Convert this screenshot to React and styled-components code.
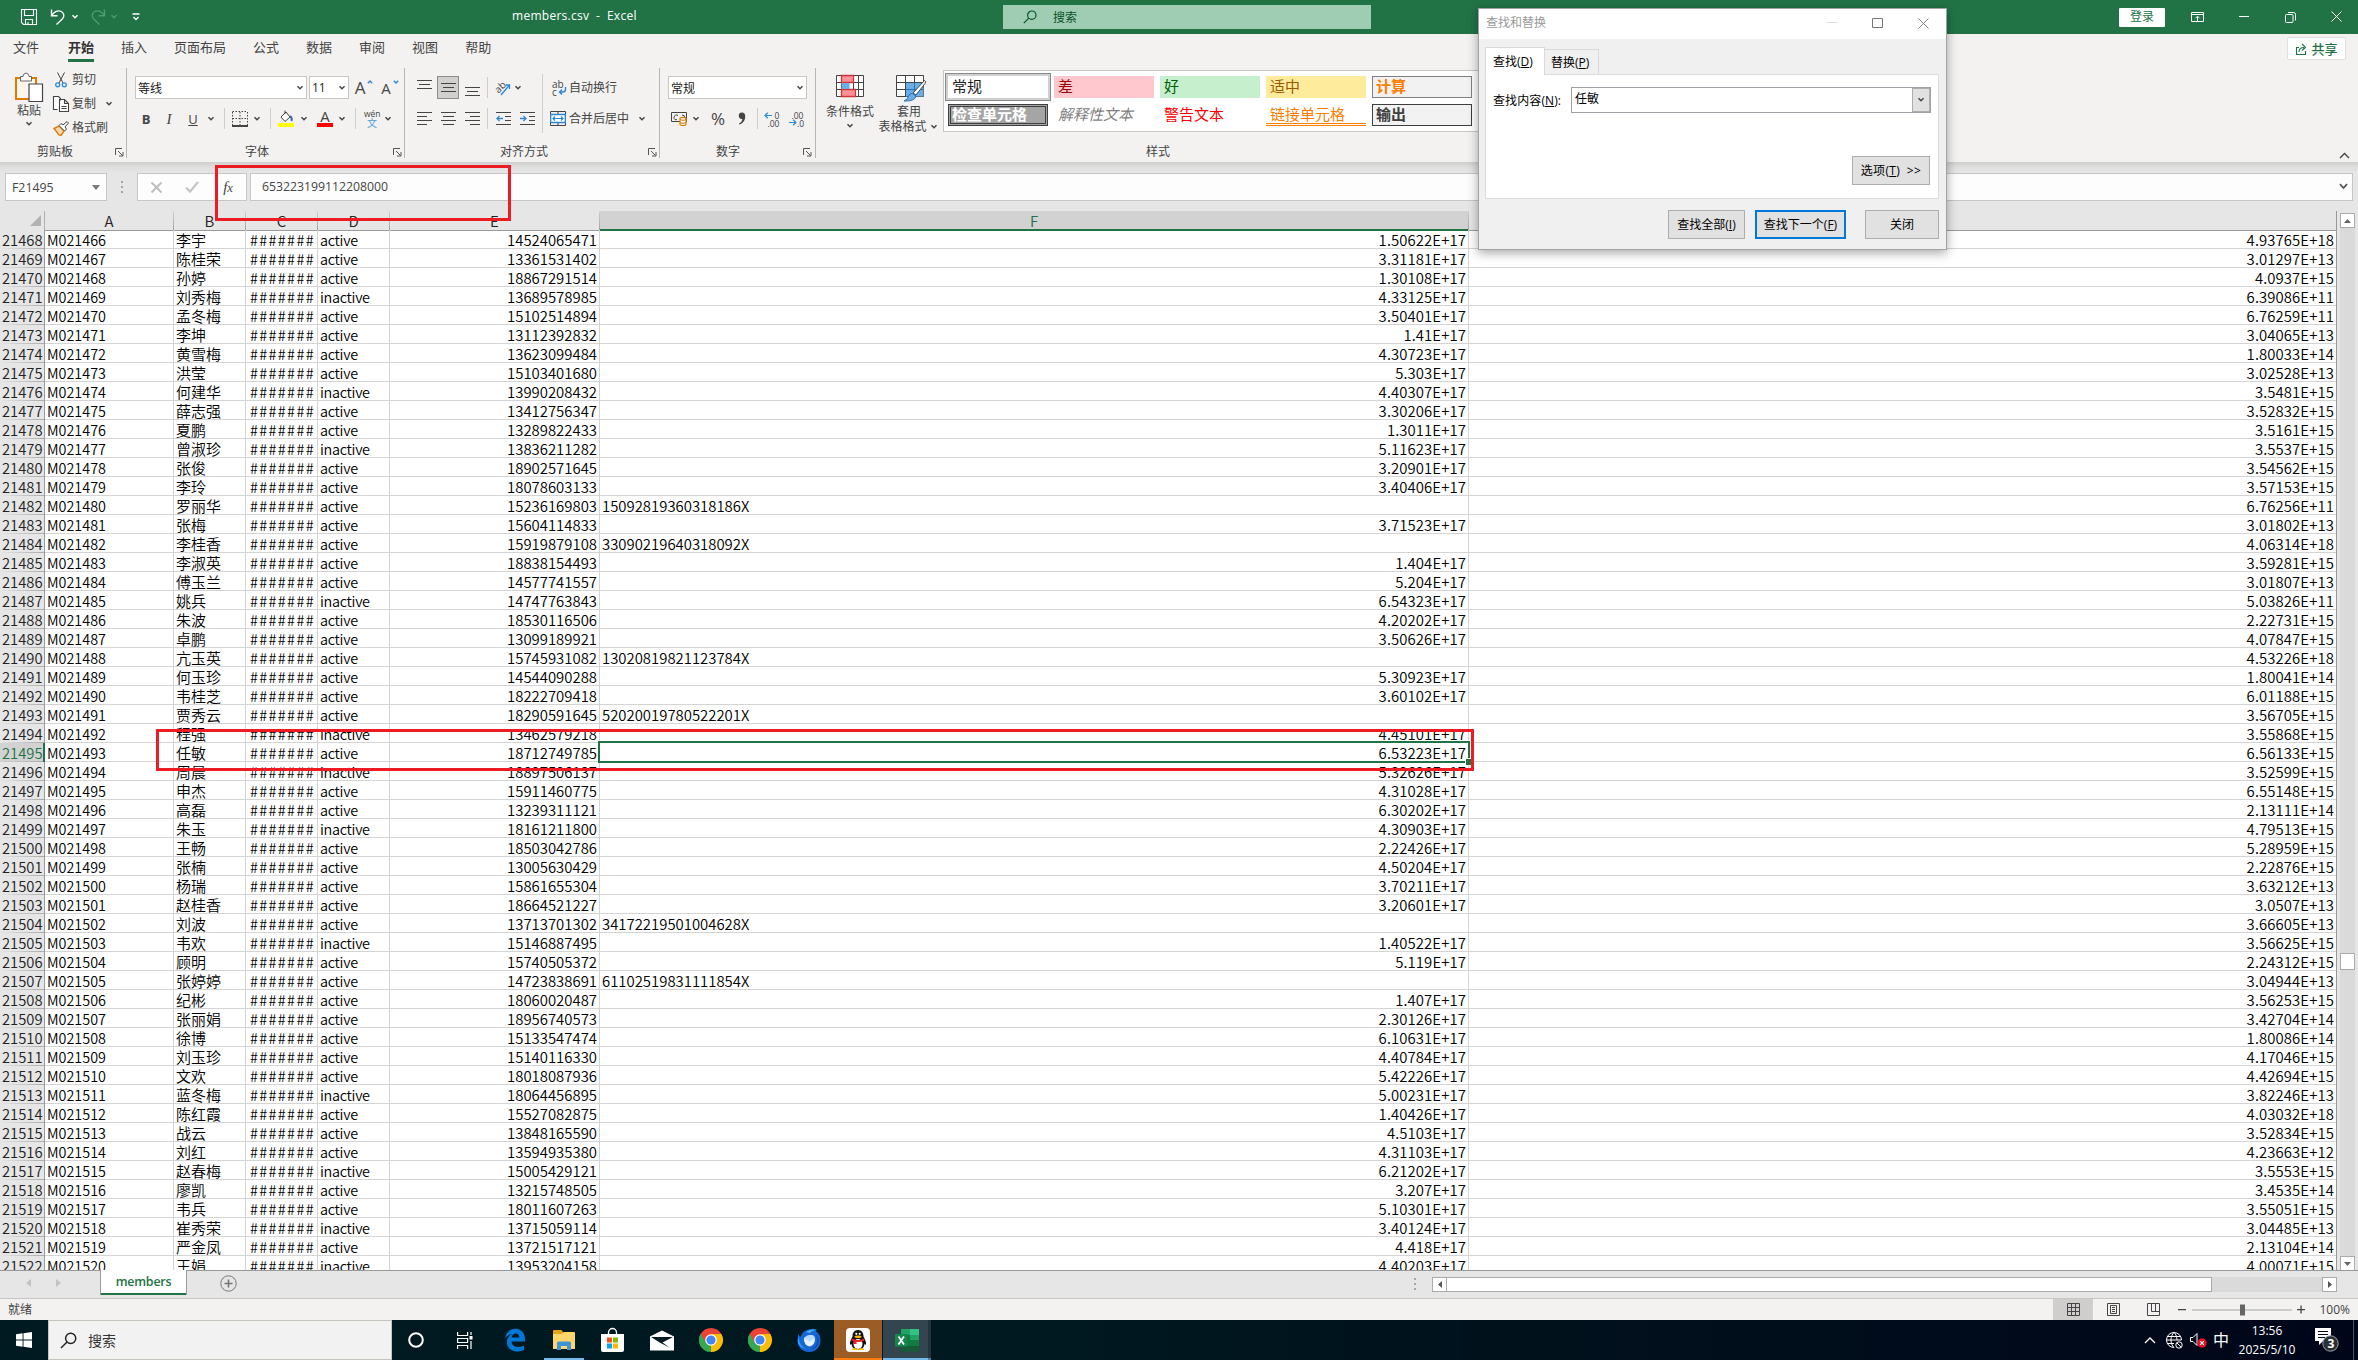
import React from "react";
import styled, { createGlobalStyle, css } from "styled-components";

const UI = `"Open Sans", "Noto Sans CJK SC", sans-serif`;
const SHEET = `"Noto Sans CJK SC", "Noto Sans", sans-serif`;
const GREEN = "#217346";
const RED = "#ed1c24";

const Global = createGlobalStyle`
  * { box-sizing: border-box; }
  html, body { margin: 0; padding: 0; overflow: hidden; }
  body { font-family: ${UI}; font-size: 12px; color: #444; }
`;

/* ---------- data ---------- */
const SOURCE = `李宇|0|14524065471|1.50622E+17|4.93765E+18
陈桂荣|0|13361531402|3.31181E+17|3.01297E+13
孙婷|0|18867291514|1.30108E+17|4.0937E+15
刘秀梅|1|13689578985|4.33125E+17|6.39086E+11
孟冬梅|0|15102514894|3.50401E+17|6.76259E+11
李坤|0|13112392832|1.41E+17|3.04065E+13
黄雪梅|0|13623099484|4.30723E+17|1.80033E+14
洪莹|0|15103401680|5.303E+17|3.02528E+13
何建华|1|13990208432|4.40307E+17|3.5481E+15
薛志强|0|13412756347|3.30206E+17|3.52832E+15
夏鹏|0|13289822433|1.3011E+17|3.5161E+15
曾淑珍|1|13836211282|5.11623E+17|3.5537E+15
张俊|0|18902571645|3.20901E+17|3.54562E+15
李玲|0|18078603133|3.40406E+17|3.57153E+15
罗丽华|0|15236169803|15092819360318186X|6.76256E+11
张梅|0|15604114833|3.71523E+17|3.01802E+13
李桂香|0|15919879108|33090219640318092X|4.06314E+18
李淑英|0|18838154493|1.404E+17|3.59281E+15
傅玉兰|0|14577741557|5.204E+17|3.01807E+13
姚兵|1|14747763843|6.54323E+17|5.03826E+11
朱波|0|18530116506|4.20202E+17|2.22731E+15
卓鹏|0|13099189921|3.50626E+17|4.07847E+15
亢玉英|0|15745931082|13020819821123784X|4.53226E+18
何玉珍|0|14544090288|5.30923E+17|1.80041E+14
韦桂芝|0|18222709418|3.60102E+17|6.01188E+15
贾秀云|0|18290591645|52020019780522201X|3.56705E+15
程强|1|13462579218|4.45101E+17|3.55868E+15
任敏|0|18712749785|6.53223E+17|6.56133E+15
周晨|1|18897506137|5.32626E+17|3.52599E+15
申杰|0|15911460775|4.31028E+17|6.55148E+15
高磊|0|13239311121|6.30202E+17|2.13111E+14
朱玉|1|18161211800|4.30903E+17|4.79513E+15
王畅|0|18503042786|2.22426E+17|5.28959E+15
张楠|0|13005630429|4.50204E+17|2.22876E+15
杨瑞|0|15861655304|3.70211E+17|3.63212E+13
赵桂香|0|18664521227|3.20601E+17|3.0507E+13
刘波|0|13713701302|34172219501004628X|3.66605E+13
韦欢|1|15146887495|1.40522E+17|3.56625E+15
顾明|0|15740505372|5.119E+17|2.24312E+15
张婷婷|0|14723838691|61102519831111854X|3.04944E+13
纪彬|0|18060020487|1.407E+17|3.56253E+15
张丽娟|0|18956740573|2.30126E+17|3.42704E+14
徐博|0|15133547474|6.10631E+17|1.80086E+14
刘玉珍|0|15140116330|4.40784E+17|4.17046E+15
文欢|0|18018087936|5.42226E+17|4.42694E+15
蓝冬梅|1|18064456895|5.00231E+17|3.82246E+13
陈红霞|0|15527082875|1.40426E+17|4.03032E+18
战云|0|13848165590|4.5103E+17|3.52834E+15
刘红|0|13594935380|4.31103E+17|4.23663E+12
赵春梅|1|15005429121|6.21202E+17|3.5553E+15
廖凯|0|13215748505|3.207E+17|3.4535E+14
韦兵|0|18011607263|5.10301E+17|3.55051E+15
崔秀荣|1|13715059114|3.40124E+17|3.04485E+13
严金凤|0|13721517121|4.418E+17|2.13104E+14
王娟|1|13953204158|4.40203E+17|4.00071E+15`;

const ROWS = SOURCE.split("\n").map((line, i) => {
  const [name, inactive, phone, idNo, card] = line.split("|");
  return { n: 21468 + i, member: "M0" + (21466 + i), name, status: inactive === "1" ? "inactive" : "active", phone, idNo, card };
});
const ACTIVE_ROW = 21495;
const COLUMNS = "45px 129px 72px 72px 72px 210px 869px 868px";

/* ---------- shell ---------- */
const Screen = styled.div`
  position: relative;
  width: 2358px;
  height: 1360px;
  display: flex;
  flex-direction: column;
  overflow: hidden;
  background: #e6e6e6;
`;
const Icon = styled.svg`
  display: block;
  flex: none;
  margin-left: ${(p) => p.$ml || 0}px;
  margin-top: ${(p) => p.$mt || 0}px;
  overflow: visible;
`;
const Chevron = ({ ml, mt, color = "#444", w = 8 }) => (
  <Icon $ml={ml} $mt={mt} width={w} height="6" viewBox="0 0 8 6" fill="none" stroke={color} strokeWidth="1.4">
    <path d="M1.5 1.2 4 3.8 6.5 1.2" />
  </Icon>
);
const Label = styled.span`
  flex: none;
  white-space: nowrap;
  font-size: ${(p) => p.$size || 12}px;
  line-height: 16px;
  margin-left: ${(p) => p.$ml || 0}px;
`;

/* ---------- title bar ---------- */
const TitleBar = styled.header`
  height: 34px;
  flex: none;
  display: flex;
  align-items: center;
  background: ${GREEN};
  color: #fff;
`;
const QuickAccess = styled.div`
  width: 512px;
  display: flex;
  align-items: center;
  padding-left: 21px;
`;
const FileName = styled.div`
  width: 491px;
  font-size: 12px;
  white-space: pre;
  padding-bottom: 4px;
  letter-spacing: 0.27px;
`;
const TitleSearch = styled.div`
  width: 368px;
  height: 24px;
  display: flex;
  align-items: center;
  padding-left: 20px;
  gap: 16px;
  background: #9fcdb3;
  color: #0b5229;
`;
const WindowButtons = styled.div`
  margin-left: auto;
  display: flex;
  align-items: center;
  padding-right: 16px;
`;
const Login = styled.div`
  width: 46px;
  height: 19px;
  background: #fff;
  color: ${GREEN};
  text-align: center;
  line-height: 18px;
  font-size: 12px;
  border-radius: 1px;
  margin-right: 26px;
`;

/* ---------- ribbon ---------- */
const Ribbon = styled.section`
  height: 128px;
  flex: none;
  background: #f3f2f1;
  display: flex;
  flex-direction: column;
`;
const TabRow = styled.nav`
  height: 34px;
  display: flex;
  padding-left: 13px;
  gap: 27px;
`;
const Tab = styled.div`
  height: 28px;
  font-size: 13px;
  line-height: 27px;
  color: #444;
  &:first-child { margin-right: 2px; }
  ${(p) => p.$on && css`
    font-weight: 700;
    color: #333;
    border-bottom: 3px solid ${GREEN};
  `}
`;
const Share = styled.div`
  margin: 3px 12px 0 auto;
  width: 59px;
  height: 23px;
  display: flex;
  align-items: center;
  justify-content: center;
  gap: 4px;
  font-size: 13px;
  font-weight: 500;
  color: ${GREEN};
  background: #fff;
  border: 1px solid #e1dfdd;
  border-radius: 2px;
`;
const Groups = styled.div`
  display: flex;
  height: 90px;
`;
const Group = styled.div`
  ${(p) => (p.$w ? `width: ${p.$w}px;` : "flex: 1;")}
  flex-shrink: 0;
  display: flex;
  flex-direction: column;
  ${(p) => p.$w && "border-right: 1px solid #b8b6b4;"}
`;
const GroupBody = styled.div`
  height: 75px;
  display: flex;
`;
const GroupFooter = styled.div`
  height: 15px;
  display: flex;
  align-items: center;
  font-size: 12px;
  padding-top: 3px;
  line-height: 14px;
  padding-left: ${(p) => p.$pl}px;
`;
const Launcher = styled(Icon)`
  margin-left: auto;
  margin-right: ${(p) => p.$mr}px;
`;
const Stack = styled.div`
  display: flex;
  flex-direction: column;
`;
const Tools = styled.div`
  display: flex;
  align-items: center;
  height: 23px;
  margin-top: 8px;
`;
const MiniRow = styled.div`
  display: flex;
  align-items: center;
  height: 24px;
`;
const BigButton = styled.div`
  display: flex;
  flex-direction: column;
  align-items: center;
  width: ${(p) => p.$w}px;
  margin-left: ${(p) => p.$ml || 0}px;
  padding-top: ${(p) => p.$pt}px;
  line-height: 15px;
  text-align: center;
  white-space: nowrap;
`;
const BigLabel = styled.span`
  margin-top: ${(p) => p.$mt || 0}px;
  padding-left: ${(p) => p.$pl || 0}px;
`;
const Combo = styled.div`
  height: 23px;
  width: ${(p) => p.$w}px;
  margin-left: ${(p) => p.$ml || 0}px;
  display: flex;
  align-items: center;
  justify-content: space-between;
  padding: 0 2px 0 2px;
  border: 1px solid #c8c6c4;
  background: #fff;
  color: #222;
  font-size: 12px;
`;
const Divider = styled.i`
  width: 1px;
  flex: none;
  height: ${(p) => p.$h || 21}px;
  margin-left: ${(p) => p.$ml}px;
  margin-top: ${(p) => p.$mt || 0}px;
  background: #d0cecc;
`;
const Glyph = styled.span`
  width: 16px;
  flex: none;
  text-align: center;
  margin-left: ${(p) => p.$ml || 0}px;
  font: ${(p) => p.$font};
  color: ${(p) => p.$c || "#444"};
`;
const PressedTool = styled.div`
  width: 22px;
  height: 23px;
  margin-left: 5px;
  display: flex;
  align-items: center;
  justify-content: center;
  background: #d2d0ce;
  border: 1px solid #8f8d8b;
`;
const Gallery = styled.div`
  width: 540px;
  height: 62px;
  margin: 2px 0 0 3px;
  padding: 5px 0 0 4px;
  display: grid;
  grid-template-columns: repeat(5, 100px);
  grid-auto-rows: 22px;
  gap: 6px;
  background: #fff;
  border: 1px solid #c8c6c4;
`;
const StyleCell = styled.div`
  padding-left: 4px;
  font-family: ${SHEET};
  font-size: 15px;
  line-height: 20px;
  white-space: nowrap;
  color: ${(p) => p.$c || "#222"};
  background: ${(p) => p.$bg || "#fff"};
  ${(p) => p.$css}
`;
const MiniInline = styled.div`
  display: flex;
  align-items: center;
`;
const RibbonShadow = styled.div`
  height: 11px;
  flex: none;
  display: flex;
  justify-content: flex-end;
  padding-right: 8px;
  background: linear-gradient(#cfcecd, #dedede 45%, #e6e6e6);
`;

/* ---------- formula bar ---------- */
const FormulaBar = styled.section`
  height: 28px;
  flex: none;
  display: flex;
  padding-left: 5px;
  font-size: 12.3px;
`;
const NameBox = styled.div`
  width: 102px;
  border: 1px solid #c6c6c6;
  background: #fdfdfd;
  display: flex;
  align-items: center;
  padding: 0 6px;
  justify-content: space-between;
`;
const Dots = styled.div`
  width: 30px;
  display: flex;
  flex-direction: column;
  align-items: center;
  justify-content: center;
  gap: 3px;
  &::before, &::after, & > i { content: ""; width: 2px; height: 2px; background: #a5a5a5; }
`;
const EntryButtons = styled.div`
  width: 110px;
  border: 1px solid #c6c6c6;
  background: #fdfdfd;
  display: flex;
  align-items: center;
`;
const FormulaInput = styled.div`
  width: 2103px;
  margin-left: 3px;
  border: 1px solid #c6c6c6;
  background: #fdfdfd;
  display: flex;
  align-items: center;
  justify-content: space-between;
  padding: 0 4px 2px 11px;
  letter-spacing: -0.03px;
`;

/* ---------- sheet ---------- */
const SheetArea = styled.main`
  height: 1069px;
  flex: none;
  display: flex;
  padding-top: 10px;
`;
const Sheet = styled.div`
  position: relative;
  width: 2337px;
  height: 1059px;
  overflow: hidden;
  font-family: ${SHEET};
  border-right: 1px solid #999;
  background: #fff;
`;
const HeaderRow = styled.div`
  display: grid;
  grid-template-columns: ${COLUMNS};
  height: 19px;
  background: #e6e6e6;
`;
const ColHead = styled.div`
  text-align: center;
  font-size: 15px;
  line-height: 20px;
  font-weight: 350;
  color: #222;
  border-right: 1px solid;
  border-image: linear-gradient(#d6d6d6, #9b9b9b) 1;
  box-shadow: inset 0 -1px #9b9b9b;
  ${(p) => p.$on && css`
    background: #d2d2d2;
    color: ${GREEN};
    box-shadow: inset 0 -2px ${GREEN};
  `}
`;
const Corner = styled.div`
  display: flex;
  justify-content: flex-end;
  align-items: flex-end;
  padding: 0 3px 4px 0;
  border-right: 1px solid #b0b0b0;
  border-bottom: 1px solid #9b9b9b;
`;
const Row = styled.div`
  display: grid;
  grid-template-columns: ${COLUMNS};
  height: 19px;
`;
const RowHead = styled.div`
  font-size: 14.8px;
  line-height: 19px;
  font-weight: 350;
  padding-left: 2px;
  color: #222;
  border-right: 1px solid #9b9b9b;
  background: linear-gradient(90deg, #e6e6e6, #ababab) bottom / 100% 1px no-repeat, #e6e6e6;
  ${(p) => p.$on && css`
    color: ${GREEN};
    background: linear-gradient(90deg, #d2d2d2, #ababab) bottom / 100% 1px no-repeat, #d2d2d2;
    border-right: 2px solid ${GREEN};
  `}
`;
const Cell = styled.div`
  overflow: hidden;
  white-space: nowrap;
  height: 19px;
  padding: 0 2px;
  font-size: ${(p) => p.$size || 14.4}px;
  line-height: 19px;
  font-weight: 350;
  letter-spacing: ${(p) => p.$ls || 0}px;
  text-align: ${(p) => (p.$right ? "right" : "left")};
  color: #000;
  border-right: 1px solid #d4d4d4;
  border-bottom: 1px solid #d4d4d4;
`;
const Selection = styled.div`
  position: absolute;
  left: 598px;
  top: 530px;
  width: 872px;
  height: 22px;
  border: 2px solid ${GREEN};
  &::after {
    content: "";
    position: absolute;
    right: -4px;
    bottom: -4px;
    width: 6px;
    height: 6px;
    background: ${GREEN};
    border: solid #fff;
    border-width: 1px 0 0 1px;
  }
`;
const VScroll = styled.div`
  width: 15px;
  height: 1058px;
  margin: 2px 0 0 3px;
  display: flex;
  flex-direction: column;
  background: #dadada;
`;
const ScrollButton = styled.div`
  width: 15px;
  height: 15px;
  flex: none;
  display: flex;
  align-items: center;
  justify-content: center;
  background: #fff;
  border: 1px solid #ababab;
`;
const VThumb = styled.div`
  height: 17px;
  margin: 725px 0 auto;
  border: 1px solid #ababab;
  background: #fff;
`;

/* ---------- sheet tabs and status ---------- */
const SheetTabs = styled.div`
  height: 28px;
  flex: none;
  display: flex;
  border-top: 1px solid #999;
`;
const TabArrows = styled.div`
  width: 100px;
  display: flex;
  padding: 8px 0 0 26px;
  gap: 22px;
`;
const SheetTab = styled.div`
  width: 87px;
  height: 25px;
  margin-top: -1px;
  background: #fff;
  color: ${GREEN};
  border: solid #9b9b9b;
  border-width: 0 1px;
  box-shadow: inset 0 -2px ${GREEN};
  text-align: center;
  font-size: 12.4px;
  font-weight: 600;
  line-height: 24px;
  letter-spacing: -0.2px;
`;
const HScroll = styled.div`
  width: 905px;
  height: 15px;
  margin: 6px 0 0 11px;
  display: flex;
  background: #dadada;
`;
const HThumb = styled.div`
  width: 766px;
  margin: 0 auto 0 -1px;
  border: 1px solid #ababab;
  background: #fff;
`;
const TabDots = styled(Dots)`
  width: 12px;
  height: 26px;
`;
const TabBarRight = styled.div`
  margin-left: auto;
  display: flex;
  padding-right: 21px;
`;
const StatusBar = styled.footer`
  height: 22px;
  flex: none;
  display: flex;
  align-items: center;
  padding: 0 8px;
  border-top: 1px solid #c6c6c6;
  background: #f3f2f1;
`;
const StatusRight = styled.div`
  margin-left: auto;
  display: flex;
  align-items: center;
  height: 21px;
`;
const ViewButton = styled.div`
  width: 40px;
  height: 21px;
  display: flex;
  align-items: center;
  justify-content: center;
  background: ${(p) => (p.$on ? "#d0cecc" : "none")};
`;

/* ---------- taskbar ---------- */
const Taskbar = styled.footer`
  height: 40px;
  flex: none;
  display: flex;
  align-items: center;
  background: linear-gradient(90deg, #001a22 0%, #001820 45%, #000f1b 70%, #00061a 100%);
  color: #fff;
`;
const StartButton = styled.div`
  width: 48px;
  display: flex;
  justify-content: center;
`;
const TaskSearch = styled.div`
  width: 344px;
  height: 40px;
  display: flex;
  align-items: center;
  gap: 11px;
  padding-left: 11px;
  font-size: 14px;
  color: #333;
  background: #f2f2f2;
  border: 1px solid #c4c4bc;
`;
const TaskItem = styled.div`
  width: ${(p) => p.$w || 49}px;
  height: 40px;
  flex: none;
  display: flex;
  align-items: center;
  justify-content: center;
  background: ${(p) => p.$bg || "none"};
  margin-right: ${(p) => p.$mr || 0}px;
  ${(p) => p.$line && css`
    background: linear-gradient(${p.$line}, ${p.$line}) center bottom / ${p.$lw || "100%"} 2px no-repeat, ${p.$bg || "transparent"};
  `}
`;
const Tray = styled.div`
  margin-left: auto;
  display: flex;
  align-items: center;
`;
const Clock = styled.div`
  width: 64px;
  margin-left: 6px;
  text-align: center;
  font-size: 12px;
  line-height: 19px;
`;
const PeekLine = styled.i`
  width: 1px;
  height: 40px;
  margin: 0 4px 0 14px;
  background: #4b5560;
`;

/* ---------- dialog ---------- */
const Dialog = styled.div`
  position: absolute;
  left: 1478px;
  top: 8px;
  width: 469px;
  height: 242px;
  display: flex;
  flex-direction: column;
  color: #000;
  background: #f0f0f0;
  border: 1px solid #a2a2a2;
  box-shadow: 0 3px 10px rgba(0, 0, 0, 0.35);
`;
const DialogTitle = styled.div`
  height: 30px;
  flex: none;
  display: flex;
  align-items: center;
  padding: 0 17px 2px 7px;
  background: #fff;
  color: #999;
`;
const DialogTabs = styled.div`
  display: flex;
  align-items: flex-end;
  height: 35px;
  padding-left: 6px;
`;
const DialogTab = styled.div`
  height: ${(p) => (p.$on ? 28 : 25)}px;
  width: ${(p) => p.$w}px;
  padding-left: ${(p) => (p.$on ? 7 : 6)}px;
  line-height: ${(p) => (p.$on ? 28 : 25)}px;
  white-space: nowrap;
  background: ${(p) => (p.$on ? "#fff" : "#f0f0f0")};
  border: 1px solid #d9d9d9;
  border-bottom: 0;
  ${(p) => (p.$on ? "margin-bottom: -1px; position: relative;" : "border-left: 0;")}
`;
const DialogPanel = styled.div`
  margin-left: 6px;
  width: 454px;
  height: 125px;
  border: 1px solid #dcdcdc;
  background: #fff;
  display: flex;
  flex-direction: column;
  padding: 12px 7px 0 7px;
`;
const FieldRow = styled.div`
  display: flex;
  align-items: center;
  letter-spacing: 0.1px;
`;
const Field = styled.div`
  width: 360px;
  height: 26px;
  margin-left: auto;
  display: flex;
  justify-content: space-between;
  border: 1px solid #a0a0a6;
  padding-left: 3px;
  line-height: 22px;
`;
const DropButton = styled.div`
  width: 18px;
  display: flex;
  align-items: center;
  justify-content: center;
  background: #e1e1e1;
  border: 1px solid #adadad;
`;
const Button = styled.div`
  width: ${(p) => p.$w}px;
  height: 29px;
  margin-left: ${(p) => p.$ml || 0}px;
  text-align: center;
  line-height: ${(p) => (p.$primary ? 25 : 27)}px;
  letter-spacing: ${(p) => p.$ls || 0}px;
  white-space: pre;
  background: #e1e1e1;
  border: ${(p) => (p.$primary ? "2px solid #0078d7" : "1px solid #adadad")};
`;
const OptionsRow = styled.div`
  display: flex;
  justify-content: flex-end;
  margin-top: 43px;
  padding-right: 1px;
`;
const DialogActions = styled.div`
  display: flex;
  justify-content: flex-end;
  padding: 11px 7px 0 0;
`;
const Highlight = styled.div`
  position: absolute;
  left: ${(p) => p.$x}px;
  top: ${(p) => p.$y}px;
  width: ${(p) => p.$w}px;
  height: ${(p) => p.$h}px;
  border: 3px solid ${RED};
`;

/* ---------- icons ---------- */
const Lines = ({ ml, mt, rows, h = 15 }) => (
  <Icon $ml={ml} $mt={mt} width="15" height={h} viewBox={`0 0 15 ${h}`} stroke="#444" strokeWidth="1">
    {rows.map(([a, b, y]) => <path key={y} d={`M${a} ${y + 0.5}H${b}`} />)}
  </Icon>
);
const LauncherIcon = ({ mr }) => (
  <Launcher $mr={mr} width="9" height="9" viewBox="0 0 9 9" fill="none" stroke="#555">
    <path d="M.5 7V.5H7M3 3l4.5 4.5M8 4v4H4" />
  </Launcher>
);
const Magnifier = ({ s = 14, color }) => (
  <Icon width={s} height={s} viewBox="0 0 14 14" fill="none" stroke={color} strokeWidth="1.2">
    <circle cx="8.8" cy="5.2" r="4.2" /><path d="M5.8 8.2.8 13.2" />
  </Icon>
);
const Chrome = () => (
  <Icon width="24" height="24" viewBox="0 0 24 24">
    <path d="M12 12 1.6 6A12 12 0 0 1 22.4 6Z" fill="#ea4335" />
    <path d="M12 12 22.4 6A12 12 0 0 1 12 24Z" fill="#fbbc05" />
    <path d="M12 12 12 24A12 12 0 0 1 1.6 6Z" fill="#34a853" />
    <path d="M12 6H22.4L17.2 15Z" fill="#fbbc05" /><path d="M6.8 15 1.6 6 12 6Z" fill="#ea4335" />
    <path d="M1.6 6 6.8 15 12 18 9 23.6A12 12 0 0 1 1.6 6Z" fill="#34a853" />
    <circle cx="12" cy="12" r="5.8" fill="#fff" /><circle cx="12" cy="12" r="4.6" fill="#4285f4" />
  </Icon>
);
const Thunderbird = () => (
  <Icon width="24" height="24" viewBox="0 0 24 24">
    <path d="M1.500 5.500Q2 9 4 8.500 5 4 9 2.500 14-.5 20 1.500L18.500 3q5 3 5 9.500A11.300 11.300 0 0 1 12 24C5.500 24 .5 19 .5 12.500q0-4 1-7Z" fill="#1567d3" />
    <path d="M9 4Q13 .8 19 1.700 14 3 13 5Z" fill="#4ab3ff" />
    <path d="M2 9q0 8 6 11.500Q3 20 1 15 .2 12 2 9Z" fill="#2f9bff" />
    <path d="M7 10q3-3 6.500-3 4 0 4.500 4 0 6-5.500 7.500Q6.500 17 7 10Z" fill="#e6f2ff" />
    <path d="m7 10 5.500 3.500L18 10q-1-3-4.500-3T7 10Z" fill="#b5d9ff" />
    <path d="M18 6q3.500 4 1.500 9.500-2 4.500-6.500 6 8-1 9-8Q22.300 8.500 18 6Z" fill="#0c4fae" />
  </Icon>
);

function TopBar() {
  return (
    <TitleBar>
      <QuickAccess>
        <Icon width="16" height="16" viewBox="0 0 16 16" fill="none" stroke="#fff" strokeWidth="1.1">
          <path d="M.5.5h15v15H2.5l-2-2ZM3.5.5v6h9v-6M4.5 15.5v-5h7v5M7 15v-2" />
        </Icon>
        <Icon $ml={13} width="15" height="16" viewBox="0 0 15 16" fill="none" stroke="#fff" strokeWidth="1.4">
          <path d="M1.5.5v6.2h6M1.8 6.4C4 2.6 8 .8 11.300 2.500c3 1.700 3.200 5 1.200 7.200L6.500 15.500" />
        </Icon>
        <Chevron ml={6} color="#fff" />
        <Icon $ml={12} width="15" height="16" viewBox="0 0 15 16" fill="none" stroke="#4f9a70" strokeWidth="1.4">
          <path d="M13.500.500v6.200h-6M13.200 6.400C11 2.600 7 .8 3.700 2.500c-3 1.700-3.200 5-1.200 7.200L8.500 15.500" />
        </Icon>
        <Chevron ml={4} color="#4f9a70" />
        <Icon $ml={14} width="8" height="8" viewBox="0 0 8 8" fill="none" stroke="#fff" strokeWidth="1.300">
          <path d="M.5 1h7M1.500 4 4 6.500 6.500 4" />
        </Icon>
      </QuickAccess>
      <FileName>members.csv  -  Excel</FileName>
      <TitleSearch><Magnifier color="#0b5229" /><span>搜索</span></TitleSearch>
      <WindowButtons>
        <Login>登录</Login>
        <Icon width="13" height="12" viewBox="0 0 13 12" fill="none" stroke="#fff"><path d="M.5 1.500h12v9H.5ZM.5 3.500h12M6.500 10V5.500M4.500 7.200l2-2 2 2" /></Icon>
        <Icon $ml={35} width="10" height="2" viewBox="0 0 10 2" fill="#fff"><path d="M0 0h10v1H0Z" /></Icon>
        <Icon $ml={36} width="11" height="11" viewBox="0 0 11 11" fill="none" stroke="#fff"><path d="M.5 3.500q0-1 1-1h5.500q1 0 1 1v6q0 1-1 1h-5.500q-1 0-1-1ZM3 .5h5.500q2 0 2 2V8.500" /></Icon>
        <Icon $ml={35} $mt={-1} width="11" height="11" viewBox="0 0 11 11" stroke="#fff"><path d="M.5.5l10 10M10.500.5l-10 10" /></Icon>
      </WindowButtons>
    </TitleBar>
  );
}

function ClipboardGroup() {
  return (
    <Group $w={127}>
      <GroupBody>
        <BigButton $w={34} $ml={12} $pt={4}>
          <Icon width="28" height="31" viewBox="0 0 28 31" fill="none">
            <path d="M1 6h20v21H1Z" stroke="#e07b00" strokeWidth="2" fill="#fdf6ec" />
            <path d="M5.500 9V4.500H8C8.500 0 13.500 0 14 4.500h2.500V9Z" fill="#fff" stroke="#666" />
            <path d="M14 12h13.500v17.500H14Z" fill="#fff" stroke="#444" strokeWidth="1.200" />
          </Icon>
          <span>粘贴</span>
          <Chevron mt={3} />
        </BigButton>
        <Stack>
          <MiniRow>
            <Icon $ml={9} width="12" height="16" viewBox="0 0 12 16" fill="none">
              <path d="M2.500.5 8 11M9.500.5 4 11" stroke="#444" /><circle cx="2.700" cy="12.800" r="2" stroke="#2b88d8" strokeWidth="1.300" /><circle cx="9.300" cy="12.800" r="2" stroke="#2b88d8" strokeWidth="1.300" />
            </Icon>
            <Label $ml={5}>剪切</Label>
          </MiniRow>
          <MiniRow>
            <Icon $ml={7} width="16" height="16" viewBox="0 0 16 16" fill="#fff" stroke="#444" strokeWidth="1.100">
              <path d="M4.500 13.500h-4V.5h5l2 2v2M6.500 3.500h5l4 4v8h-9ZM11.500 3.500v4h4M8.500 10.500h5M8.500 12.500h5" />
            </Icon>
            <Label $ml={3}>复制</Label><Chevron ml={9} />
          </MiniRow>
          <MiniRow>
            <Icon $ml={7} width="16" height="15" viewBox="0 0 16 15" fill="none">
              <path d="M1 7.500 6 5l5 5-3 4.500-2-.5Z" fill="#fbd9b0" stroke="#e07b00" strokeWidth="1.400" />
              <path d="M6 4.500 8 2.500l2 1.500 4-3.500 1.500 1.500-3.500 4 1.500 2-2 2Z" fill="#fff" stroke="#444" />
            </Icon>
            <Label $ml={3}>格式刷</Label>
          </MiniRow>
        </Stack>
      </GroupBody>
      <GroupFooter $pl={37}>剪贴板<LauncherIcon mr={2} /></GroupFooter>
    </Group>
  );
}

function FontGroup() {
  return (
    <Group $w={278}>
      <GroupBody>
        <Stack>
          <Tools>
            <Combo $w={172} $ml={8}>等线<Chevron /></Combo>
            <Combo $w={40} $ml={2}>11<Chevron /></Combo>
            <Glyph $ml={3} $font={`17px/20px ${UI}`}>A</Glyph>
            <Icon $ml={-1} $mt={-12} width="6" height="4" viewBox="0 0 6 4" fill="none" stroke="#2b88d8" strokeWidth="1.300"><path d="M.8 3.200 3 1l2.200 2.200" /></Icon>
            <Glyph $ml={5} $font={`15px/20px ${UI}`}>A</Glyph>
            <Icon $ml={-1} $mt={-12} width="6" height="4" viewBox="0 0 6 4" fill="none" stroke="#2b88d8" strokeWidth="1.300"><path d="M.8.800 3 3 5.200.800" /></Icon>
          </Tools>
          <Tools>
            <Glyph $ml={11} $font={`700 13px/18px ${UI}`}>B</Glyph>
            <Glyph $ml={7} $font={`italic 15px/18px "Liberation Serif", serif`}>I</Glyph>
            <Glyph $ml={8} $font={`13px/18px ${UI}`}><u>U</u></Glyph>
            <Chevron ml={6} />
            <Divider $ml={9} />
            <Icon $ml={7} width="16" height="16" viewBox="0 0 16 16" stroke="#444" fill="none">
              <path d="M.5.500h15M.5 7.500h15M.5 1v13M8 1v13M15.500 1v13" strokeDasharray="1.500 1.500" /><path d="M0 15h16" strokeWidth="2" />
            </Icon>
            <Chevron ml={5} />
            <Divider $ml={9} />
            <Icon $ml={7} width="16" height="17" viewBox="0 0 16 17" fill="none">
              <path d="M3 7 8 2l4 5-5 4.500Z" fill="#fff" stroke="#444" /><path d="M7 4V.5" stroke="#444" /><path d="M12 6q2.500 2 1.500 5" stroke="#2b6fb8" strokeWidth="2" /><path d="M0 13h16v4H0Z" fill="#ff0" />
            </Icon>
            <Chevron ml={6} />
            <Stack>
              <Glyph $ml={9} $font={`15px/13px ${UI}`}>A</Glyph>
              <Icon $ml={9} width="16" height="4"><path d="M0 0h16v4H0Z" fill="#f00" /></Icon>
            </Stack>
            <Chevron ml={5} />
            <Divider $ml={9} />
            <Stack>
              <Glyph $ml={8} $font={`8.5px/8px ${UI}`}>wén</Glyph>
              <Glyph $ml={8} $font={`10px/10px ${UI}`} $c="#4a9fdc">文</Glyph>
            </Stack>
            <Chevron ml={4} />
          </Tools>
        </Stack>
      </GroupBody>
      <GroupFooter $pl={118}>字体<LauncherIcon mr={2} /></GroupFooter>
    </Group>
  );
}

function AlignGroup() {
  return (
    <Group $w={255}>
      <GroupBody>
        <Stack>
          <Tools>
            <Lines ml={12} mt={-6} rows={[[0, 15, 0], [2, 13, 4], [0, 15, 8]]} h={10} />
            <PressedTool><Lines rows={[[0, 15, 1], [2, 13, 5], [0, 15, 9]]} h={11} /></PressedTool>
            <Lines ml={6} mt={8} rows={[[0, 15, 0], [2, 13, 4], [0, 15, 8]]} h={10} />
            <Divider $ml={7} />
            <Icon $ml={7} width="16" height="16" viewBox="0 0 16 16" fill="none">
              <text x="0" y="11" fontSize="10" fill="#444" transform="rotate(-45 5 8)" fontFamily="Open Sans">ab</text>
              <path d="M6 15 14.500 5M10.500 5h4v4" stroke="#2b88d8" strokeWidth="1.300" />
            </Icon>
            <Chevron ml={3} />
          </Tools>
          <Tools>
            <Lines ml={12} rows={[[0, 15, 1], [0, 10, 5], [0, 15, 9], [0, 10, 13]]} />
            <Lines ml={9} rows={[[0, 15, 1], [2, 13, 5], [0, 15, 9], [2, 13, 13]]} />
            <Lines ml={9} rows={[[0, 15, 1], [5, 15, 5], [0, 15, 9], [5, 15, 13]]} />
            <Divider $ml={7} />
            <Icon $ml={8} width="15" height="15" viewBox="0 0 15 15" fill="none" stroke="#444"><path d="M0 1.500h15M9 5.500h6M9 9.500h6M0 13.500h15" /><path d="M1 7.500h6M3.500 5 1 7.500 3.500 10" stroke="#2b88d8" strokeWidth="1.300" /></Icon>
            <Icon $ml={9} width="15" height="15" viewBox="0 0 15 15" fill="none" stroke="#444"><path d="M0 1.500h15M9 5.500h6M9 9.500h6M0 13.500h15" /><path d="M0 7.500h6M3.500 5 6 7.500 3.500 10" stroke="#2b88d8" strokeWidth="1.300" /></Icon>
          </Tools>
        </Stack>
        <Divider $ml={7} $mt={6} $h={59} />
        <Stack>
          <Tools>
            <Icon $ml={9} width="15" height="16" viewBox="0 0 15 16" fill="none">
              <text x="0" y="7.500" fontSize="10" fill="#444" fontFamily="Open Sans">ab</text><text x="0" y="15.500" fontSize="10" fill="#444" fontFamily="Open Sans">c</text>
              <path d="M13.500 7v2.500q0 2.500-3 2.500H7.500M10 9.500 7.500 12l2.500 2.500" stroke="#2b88d8" strokeWidth="1.400" />
            </Icon>
            <Label $ml={2}>自动换行</Label>
          </Tools>
          <Tools>
            <Icon $ml={7} width="16" height="15" viewBox="0 0 16 15" fill="none">
              <path d="M.5.500h15v14H.5ZM8 .5v3M8 11.500v3" stroke="#444" /><path d="M.7 3.500h14.600v8H.7Z" fill="#fff" stroke="#2b88d8" strokeWidth="1.300" /><path d="M3 7.500h10M5 5.500l-2 2 2 2M11 5.500l2 2-2 2" stroke="#2b88d8" strokeWidth="1.200" />
            </Icon>
            <Label $ml={3}>合并后居中</Label><Chevron ml={9} />
          </Tools>
        </Stack>
      </GroupBody>
      <GroupFooter $pl={95}>对齐方式<LauncherIcon mr={2} /></GroupFooter>
    </Group>
  );
}

function NumberGroup() {
  const digits = { fontSize: 8.5, fill: "#444", fontFamily: "Open Sans" };
  return (
    <Group $w={156}>
      <GroupBody>
        <Stack>
          <Tools><Combo $w={139} $ml={8}>常规<Chevron /></Combo></Tools>
          <Tools>
            <Icon $ml={11} width="16" height="14" viewBox="0 0 16 14" fill="none">
              <path d="M.5.500h15v9H.5Z" stroke="#444" /><path d="M3 5.500a2.500 2.500 0 0 1 4-2M3 5.500a2 2 0 0 0 3 2M11 3q3 0 3 3" stroke="#444" />
              <path d="M9 6.500v5.500q0 1.500 3 1.500t3-1.500V6.500q0-1.200-3-1.200t-3 1.200Z" fill="#fff" stroke="#e07b00" strokeWidth="1.200" /><path d="M9 7q0 1.300 3 1.300T15 7M9 10q0 1.300 3 1.300t3-1.300" stroke="#e07b00" />
            </Icon>
            <Chevron ml={5} />
            <Glyph $ml={10} $font={`17px/20px ${UI}`}>%</Glyph>
            <Icon $ml={12} width="8" height="13" viewBox="0 0 8 13"><path d="M3.800.5a3.300 3.300 0 0 1 3.400 3.700C7.200 8 5.500 11 1.500 12.500L1 11.600C3 10.600 4.200 9 4.300 7A3.200 3.200 0 1 1 3.800.5Z" fill="#444" /></Icon>
            <Divider $ml={11} />
            <Icon $ml={7} width="16" height="16" viewBox="0 0 16 16" fill="none"><path d="M0 4.500h7M2.800 1.800 0 4.500l2.800 2.700" stroke="#2b88d8" strokeWidth="1.200" /><text x="9.500" y="7.500" {...digits}>0</text><text x="2.500" y="16" {...digits}>.00</text></Icon>
            <Icon $ml={8} width="16" height="16" viewBox="0 0 16 16" fill="none"><path d="M0 11.500h7M4.200 8.800 7 11.500l-2.800 2.700" stroke="#2b88d8" strokeWidth="1.200" /><text x="2.500" y="7.500" {...digits}>.00</text><text x="8" y="16" {...digits}>.0</text></Icon>
          </Tools>
        </Stack>
      </GroupBody>
      <GroupFooter $pl={56}>数字<LauncherIcon mr={3} /></GroupFooter>
    </Group>
  );
}

const checkCell = css`border: 1px solid #3f3f3f; box-shadow: inset 0 0 0 1px #a5a5a5, inset 0 0 0 2px #3f3f3f; font-weight: 700; line-height: 18px; padding-left: 3px;`;
const activeCell = css`box-shadow: 0 0 0 2px #d0d0d0, 0 0 0 3px #8a8a8a;`;
const boxed = (c) => css`border: 1px solid ${c}; font-weight: 700; line-height: 18px; padding-left: 3px;`;
const linked = css`border-bottom: 3px double #ff8001;`;

function StylesGroup() {
  return (
    <Group>
      <GroupBody>
        <BigButton $w={52} $ml={8} $pt={7}>
          <Icon width="28" height="22" viewBox="0 0 28 22" fill="#fff" stroke="#444">
            <path d="M.5.500h27v21H.5ZM.5 7.500h27M.5 14.500h27M5.500.500v21M17.500.500v21M22.500.500v21" />
            <path d="M5.500.500h12v7h-12ZM5.500 14.500h14v7h-14Z" fill="#ff9296" stroke="#d13438" strokeWidth="1.300" /><path d="M5.500 8h8v6h-8Z" fill="#69afe5" stroke="none" />
          </Icon>
          <BigLabel $mt={7}>条件格式</BigLabel>
          <Chevron mt={4} />
        </BigButton>
        <BigButton $w={64} $ml={0} $pt={7}>
          <Icon $ml={6} width="30" height="27" viewBox="0 0 30 27" fill="#fff" stroke="#444">
            <path d="M.5.500h27v21H.5ZM.5 7.500h27M.5 14.500h27M9.500.500v21M18.500.500v21" />
            <path d="M10 8h17.500v13.500H10Z" fill="#69afe5" stroke="none" /><path d="M10 14.500h17M18.500 8v13" stroke="#2b6fb8" />
            <path d="M28.500 5.500q2 .5.500 3L20 20l-3-2Z" /><path d="M16.500 18.500l3.500 2.500q-1 5.500-12 5 4-1.500 4.500-5 1.500-3 4-2.500Z" fill="#69afe5" stroke="#2b6fb8" />
          </Icon>
          <BigLabel $mt={2} $pl={2}>套用</BigLabel>
          <MiniInline>表格格式<Chevron ml={3} /></MiniInline>
        </BigButton>
        <Gallery>
          <StyleCell $css={activeCell}>常规</StyleCell>
          <StyleCell $bg="#ffc7ce" $c="#9c0006">差</StyleCell>
          <StyleCell $bg="#c6efce" $c="#006100">好</StyleCell>
          <StyleCell $bg="#ffeb9c" $c="#9c5700">适中</StyleCell>
          <StyleCell $bg="#f2f2f2" $c="#fa7d00" $css={boxed("#7f7f7f")}>计算</StyleCell>
          <StyleCell $bg="#a5a5a5" $c="#fff" $css={checkCell}>检查单元格</StyleCell>
          <StyleCell $c="#7f7f7f" $css="font-style: italic;">解释性文本</StyleCell>
          <StyleCell $c="#ff0000">警告文本</StyleCell>
          <StyleCell $c="#fa7d00" $css={linked}>链接单元格</StyleCell>
          <StyleCell $bg="#f2f2f2" $c="#3f3f3f" $css={boxed("#3f3f3f")}>输出</StyleCell>
        </Gallery>
      </GroupBody>
      <GroupFooter $pl={330}>样式</GroupFooter>
    </Group>
  );
}

function SheetGrid() {
  return (
    <Sheet>
      <HeaderRow>
        <Corner><Icon width="11" height="11"><path d="M11 0v11H0Z" fill="#b2b2b2" /></Icon></Corner>
        {["A", "B", "C", "D", "E", "F", ""].map((c, i) => <ColHead key={i} $on={c === "F"}>{c}</ColHead>)}
      </HeaderRow>
      {ROWS.map((r) => (
        <Row key={r.n}>
          <RowHead $on={r.n === ACTIVE_ROW}>{r.n}</RowHead>
          <Cell>{r.member}</Cell>
          <Cell $size={15}>{r.name}</Cell>
          <Cell $right $ls={1.4}>#######</Cell>
          <Cell $ls={-0.3}>{r.status}</Cell>
          <Cell $right $size={14.9}>{r.phone}</Cell>
          <Cell $right={!r.idNo.endsWith("X")} $size={14.9} $ls={r.idNo.endsWith("X") ? 0 : 0.1}>{r.idNo}</Cell>
          <Cell $right $size={14.9} $ls={0.1}>{r.card}</Cell>
        </Row>
      ))}
      <Selection />
    </Sheet>
  );
}

function Tasks() {
  return (
    <>
      <TaskItem $w={48}><Icon width="16" height="16" viewBox="0 0 16 16" fill="none" stroke="#fff" strokeWidth="2"><circle cx="8" cy="8" r="6.800" /></Icon></TaskItem>
      <TaskItem><Icon width="16" height="17" viewBox="0 0 16 17" fill="none" stroke="#fff" strokeWidth="1.200"><path d="M.6 0v3.500h10V0M.6 6.500h10v4H.6ZM.6 17v-3.500h10V17M14 0v3M14 9v8" /><path d="M14 4v3.500" strokeWidth="3" /></Icon></TaskItem>
      <TaskItem $w={51}><Icon width="22" height="24" viewBox="0 0 22 24"><path d="M1 10.500C2 4.500 6 .8 11.500.8 18 .8 21 6 21 11v2.500H7.500c.3 4 3.500 5.500 7 5.500 2.200 0 4-.6 5.500-1.500v4.300c-1.800 1-4 1.600-6.500 1.600C7 23.400 2.800 19.500 2.800 14c0-3.500 2-6.500 5-8C5 6.300 2.500 8 1 10.500Zm6.700-1h7.600c0-2.500-1.300-4-3.600-4s-3.700 1.800-4 4Z" fill="#0078d7" /></Icon></TaskItem>
      <TaskItem $w={48} $line="#76b9ed" $lw="40px"><Icon width="22" height="21" viewBox="0 0 22 21"><path d="M0 1q0-1 1-1h7.500l1.500 2v6H0Z" fill="#e3a21a" /><path d="M0 4h9l1.500-2H21q1 0 1 1v16H0Z" fill="#ffd66b" /><path d="M4 20v-7q0-1.500 1.500-1.500h11q1.500 0 1.500 1.500v7h-4v-4H8v4Z" fill="#3a94d9" /></Icon></TaskItem>
      <TaskItem><Icon width="23" height="24" viewBox="0 0 23 24"><path d="M7.500 8V4.500a4 4 0 0 1 8 0V8" fill="none" stroke="#fff" strokeWidth="1.300" /><path d="M0 6h23v16q0 2-2 2H2q-2 0-2-2Z" fill="#fff" /><path d="M6 9.500h5v5H6Z" fill="#f25022" /><path d="M12 9.500h5v5h-5Z" fill="#7fba00" /><path d="M6 15.500h5v5H6Z" fill="#00a4ef" /><path d="M12 15.500h5v5h-5Z" fill="#ffb900" /></Icon></TaskItem>
      <TaskItem><Icon width="24" height="21" viewBox="0 0 24 21"><path d="M0 6.500 12 .5l12 6v14H0Z" fill="#fff" /><path d="M1 7h22l-10.500 5.500 7 5-9-4.500Z" fill="#001a22" /></Icon></TaskItem>
      <TaskItem><Chrome /></TaskItem>
      <TaskItem><Chrome /></TaskItem>
      <TaskItem $w={50}><Thunderbird /></TaskItem>
      <TaskItem $w={48} $mr={1} $bg="#9b5c26" $line="#ff7a0f"><Icon width="24" height="24" viewBox="0 0 24 24"><rect width="24" height="24" rx="4" fill="#fff" /><path d="M12 2c4 0 5.500 3 5.500 6.500 1 2 3 5 2.500 8-.8.5-1.500-.5-1.500-.5-.5 4-3 5.500-6.500 5.500S6 20 5.500 16c0 0-.7 1-1.500.5-.5-3 1.500-6 2.500-8C6.500 5 8 2 12 2Z" fill="#111" /><ellipse cx="12" cy="16" rx="4.500" ry="5" fill="#fff" /><path d="M6 10.500q6 3 12 0l.5 2q-6.500 3-13 0ZM7.500 12.500h3V16h-3Z" fill="#e8202a" /><ellipse cx="12" cy="8.800" rx="3.500" ry="1.200" fill="#f9b800" /><circle cx="10.300" cy="5.800" r="1.100" fill="#fff" /><circle cx="13.700" cy="5.800" r="1.100" fill="#fff" /><path d="M6 21.500q3-2 5.500 0ZM12.500 21.500q3-2 5.500 0Z" fill="#f9b800" stroke="#f9b800" /></Icon></TaskItem>
      <TaskItem $w={45} $bg="#33464f" $line="#76b9ed"><Icon $ml={3} width="24" height="23" viewBox="0 0 24 23"><path d="M6 0h9v6H6Z" fill="#21a366" /><path d="M15 0h9v6h-9Z" fill="#33c481" /><path d="M6 6h9v11H6Z" fill="#107c41" /><path d="M15 6h9v5.500h-9Z" fill="#21a366" /><path d="M15 11.500h9V17h-9Z" fill="#107c41" /><path d="M6 17h18v5.500H6Z" fill="#185c37" /><path d="M0 5h12.500v12.500H0Z" fill="#17864c" /><path d="m3.500 7.500 5.500 8M9 7.500l-5.500 8" stroke="#fff" strokeWidth="1.700" /></Icon></TaskItem>
      <TaskItem $w={3} $bg="#22343d" $line="#4f7ea3" />
    </>
  );
}

const DialogControls = styled.div`
  margin-left: auto;
  display: flex;
  align-items: center;
`;

function FindDialog() {
  return (
    <Dialog>
      <DialogTitle>
        <Label>查找和替换</Label>
        <DialogControls>
          <Icon width="10" height="2"><path d="M0 0h10v1H0Z" fill="#ddd" /></Icon>
          <Icon $ml={35} width="11" height="10" viewBox="0 0 11 10" fill="none" stroke="#777"><path d="M.5.500h10v9H.5Z" /></Icon>
          <Icon $ml={35} width="11" height="11" viewBox="0 0 11 11" stroke="#888"><path d="m.5.500 10 10M10.500.500l-10 10" /></Icon>
        </DialogControls>
      </DialogTitle>
      <DialogTabs>
        <DialogTab $on $w={60}>查找(<u>D</u>)</DialogTab>
        <DialogTab $w={54}>替换(<u>P</u>)</DialogTab>
      </DialogTabs>
      <DialogPanel>
        <FieldRow>
          <span>查找内容(<u>N</u>):</span>
          <Field>任敏<DropButton><Chevron w={10} /></DropButton></Field>
        </FieldRow>
        <OptionsRow><Button $w={78} $ls={0.3}>选项(<u>T</u>)  &gt;&gt;</Button></OptionsRow>
      </DialogPanel>
      <DialogActions>
        <Button $w={77}>查找全部(<u>I</u>)</Button>
        <Button $primary $w={91} $ml={10}>查找下一个(<u>F</u>)</Button>
        <Button $w={74} $ml={19}>关闭</Button>
      </DialogActions>
    </Dialog>
  );
}

export default function App() {
  return (
    <Screen>
      <Global />
      <TopBar />
      <Ribbon>
        <TabRow>
          {["文件", "开始", "插入", "页面布局", "公式", "数据", "审阅", "视图", "帮助"].map((t) => <Tab key={t} $on={t === "开始"}>{t}</Tab>)}
          <Share>
            <Icon width="12" height="12" viewBox="0 0 12 12" fill="none" stroke={GREEN} strokeWidth="1.100"><path d="M4 4.500H1.500v7h9V8M4 9q0-4.500 5-4.500M7 1l3.500 3.500L7 7.500" /></Icon>
            共享
          </Share>
        </TabRow>
        <Groups>
          <ClipboardGroup /><FontGroup /><AlignGroup /><NumberGroup /><StylesGroup />
        </Groups>
      </Ribbon>
      <RibbonShadow>
        <Icon $mt={-10} width="11" height="7" viewBox="0 0 11 7" fill="none" stroke="#444" strokeWidth="1.400"><path d="m1 6 4.500-4.500L10 6" /></Icon>
      </RibbonShadow>
      <FormulaBar>
        <NameBox>F21495<Icon width="8" height="5"><path d="M0 0h8L4 5Z" fill="#777" /></Icon></NameBox>
        <Dots><i /></Dots>
        <EntryButtons>
          <Icon $ml={13} width="11" height="11" viewBox="0 0 11 11" stroke="#bdbdbd" strokeWidth="1.800"><path d="m.5.500 10 10M10.500.500l-10 10" /></Icon>
          <Icon $ml={23} width="14" height="12" viewBox="0 0 14 12" fill="none" stroke="#c4c4c4" strokeWidth="2.200"><path d="m1 6.500 4 4.200L13 1" /></Icon>
          <Glyph $ml={21} $font={`italic 15px "Liberation Serif", serif`}>f<small>x</small></Glyph>
        </EntryButtons>
        <FormulaInput>653223199112208000<Icon width="9" height="7" viewBox="0 0 9 7" fill="none" stroke="#555" strokeWidth="1.700"><path d="M1 1.200 4.500 5 8 1.200" /></Icon></FormulaInput>
      </FormulaBar>
      <SheetArea>
        <SheetGrid />
        <VScroll>
          <ScrollButton><Icon width="7" height="4"><path d="M0 4h7L3.500 0Z" fill="#666" /></Icon></ScrollButton>
          <VThumb />
          <ScrollButton><Icon width="7" height="4"><path d="M0 0h7L3.500 4Z" fill="#666" /></Icon></ScrollButton>
        </VScroll>
      </SheetArea>
      <SheetTabs>
        <TabArrows>
          <Icon width="5" height="8"><path d="M5 0v8L0 4Z" fill="#c2c2c2" /></Icon>
          <Icon $ml={3} width="5" height="8"><path d="M0 0v8l5-4Z" fill="#c2c2c2" /></Icon>
        </TabArrows>
        <SheetTab>members</SheetTab>
        <Icon $ml={33} $mt={4} width="17" height="17" viewBox="0 0 17 17" fill="none" stroke="#777"><circle cx="8.500" cy="8.500" r="7.700" /><path d="M8.500 4.500v8M4.500 8.500h8" strokeWidth="1.600" /></Icon>
        <TabBarRight>
          <TabDots><i /></TabDots>
          <HScroll>
            <ScrollButton><Icon width="4" height="7"><path d="M4 0v7L0 3.500Z" fill="#555" /></Icon></ScrollButton>
            <HThumb />
            <ScrollButton><Icon width="4" height="7"><path d="M0 0v7l4-3.500Z" fill="#555" /></Icon></ScrollButton>
          </HScroll>
        </TabBarRight>
      </SheetTabs>
      <StatusBar>
        <Label>就绪</Label>
        <StatusRight>
          <ViewButton $on><Icon width="13" height="13" viewBox="0 0 13 13" fill="none" stroke="#444"><path d="M.5.500h12v12H.5ZM.5 4.500h12M.5 8.500h12M4.500.500v12M8.500.500v12" /></Icon></ViewButton>
          <ViewButton><Icon width="13" height="13" viewBox="0 0 13 13" fill="none" stroke="#444"><path d="M.5.500h12v12H.5ZM3.500 2.500h6v8h-6ZM5 4.500h3M5 6.500h3M5 8.500h3" /></Icon></ViewButton>
          <ViewButton><Icon width="13" height="13" viewBox="0 0 13 13" fill="none" stroke="#444"><path d="M.5.500h12v12H.5ZM4.500.500v8h8M8.500.500v8" /></Icon></ViewButton>
          <Icon $ml={5} width="128" height="12" viewBox="0 0 128 12"><path d="M0 5h8v1.300H0ZM119 5h8v1.300h-8ZM122.400 1.500h1.300v8h-1.300Z" fill="#444" /><path d="M14 5.500h100v1H14Z" fill="#a5a5a5" /><path d="M62 .5h5v11h-5Z" fill="#666" /></Icon>
          <Label $ml={13}>100%</Label>
        </StatusRight>
      </StatusBar>
      <Taskbar>
        <StartButton><Icon width="16" height="16" viewBox="0 0 16 16"><path d="M0 2.300 6.600 1.300v6.300H0ZM7.500 1.200 16 0v7.600H7.500ZM0 8.500h6.600v6.300L0 13.800ZM7.500 8.500H16V16l-8.500-1.200Z" fill="#fff" /></Icon></StartButton>
        <TaskSearch><Magnifier s={17} color="#222" />搜索</TaskSearch>
        <Tasks />
        <Tray>
          <Icon width="12" height="8" viewBox="0 0 12 8" fill="none" stroke="#fff" strokeWidth="1.300"><path d="m1 7 5-5 5 5" /></Icon>
          <Icon $ml={10} width="17" height="17" viewBox="0 0 17 17" fill="none" stroke="#fff"><path d="M8 15.500A7.500 7.500 0 1 1 15.500 8M8 .5C4 4 4 12 8 15.500M8 .5C10 2 11 5 11 8M1.500 4.500h13M.5 8h15M1.500 11.500H8" /><circle cx="13" cy="13" r="3.200" /><path d="m11 11 4 4" /></Icon>
          <Icon $ml={7} width="17" height="16" viewBox="0 0 17 16" fill="none" stroke="#fff"><path d="M.5 5.500h2.500l4-4v12l-4-4H.5Z" /><circle cx="12" cy="11" r="4.700" fill="#e81123" stroke="none" /><path d="m10.200 9.200 3.600 3.600M13.800 9.200l-3.600 3.600" strokeWidth="1.200" /></Icon>
          <Label $ml={6} $size={16}>中</Label>
          <Clock>13:56<br />2025/5/10</Clock>
          <Icon $ml={16} width="24" height="24" viewBox="0 0 24 24"><path d="M0 0h16v13H8l-4 4v-4H0Z" fill="#fff" /><path d="M3 3.500h10M3 6.500h10M3 9.500h7" stroke="#00081a" /><circle cx="15.500" cy="15.500" r="7.700" fill="#2c2f33" stroke="#9aa0a6" /><text x="12.500" y="20" fontSize="12" fontWeight="700" fill="#fff" fontFamily="Open Sans">3</text></Icon>
          <PeekLine />
        </Tray>
      </Taskbar>
      <FindDialog />
      <Highlight $x={215} $y={165} $w={296} $h={56} />
      <Highlight $x={156} $y={729} $w={1318} $h={42} />
    </Screen>
  );
}
